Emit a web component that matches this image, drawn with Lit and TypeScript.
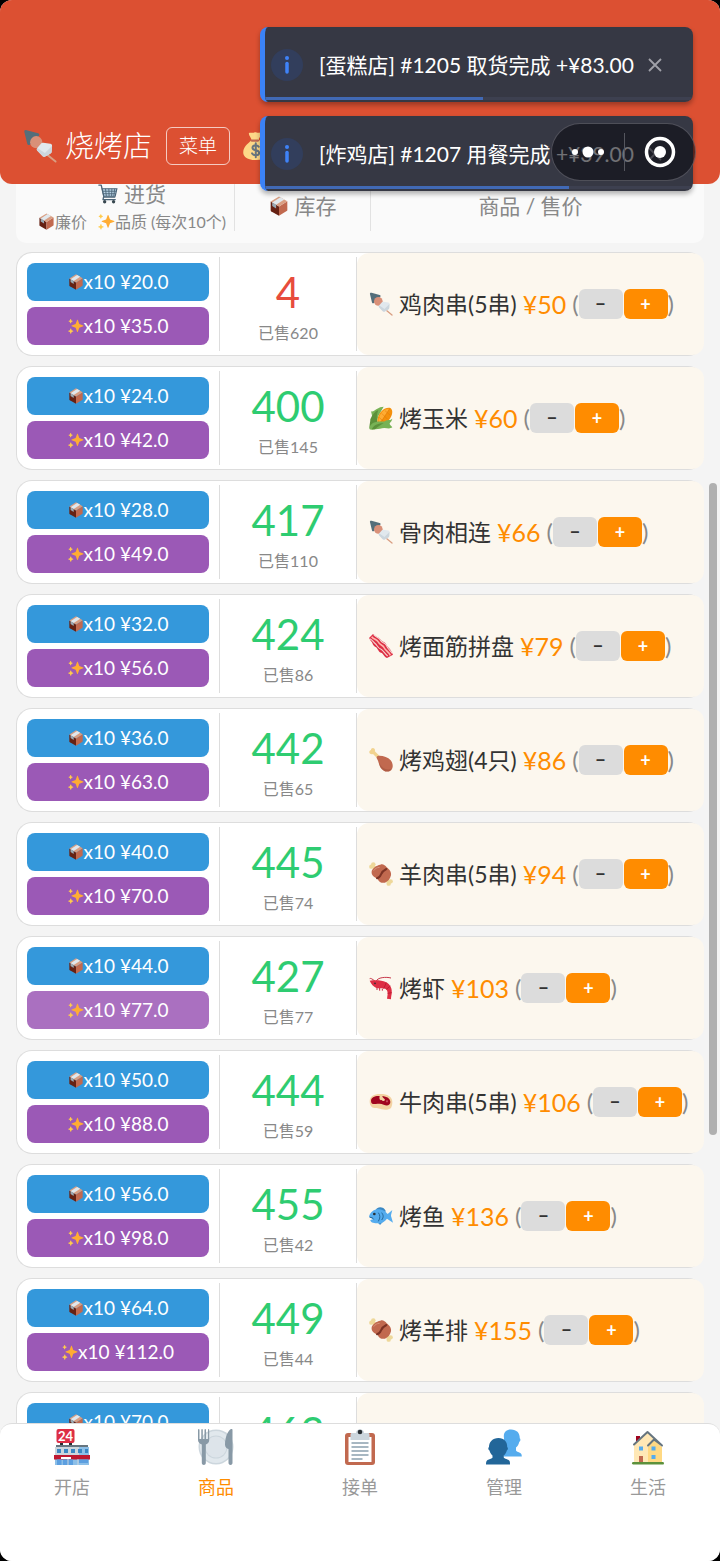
import { LitElement, html, css, svg } from "lit";
import { customElement, property } from "lit/decorators.js";
import { classMap } from "lit/directives/class-map.js";
import { styleMap } from "lit/directives/style-map.js";

const glyphs: Record<string, unknown> = {
  skewer: svg`
    <path d="M24 26l10.500 8.500" stroke="#d99e82" stroke-width="2" stroke-linecap="round"/>
    <path fill="#546e7a" d="M1.500 3.500C1 1.500 2 .8 3.800 1.200L16 4.500c1.500.5 1.700 2 .7 3L7.500 16.500c-1.200 1-2.600.6-3-.8z"/>
    <circle cx="14" cy="14" r="6.500" fill="#d99078"/>
    <path fill="#e1e8ed" d="M21.500 14.500l7.500 1.200c1.300.3 1.800 1.300 1.800 2.400l-.5 6c-.1 1-.7 1.600-1.500 2l-5.300 3c-1 .6-2 .4-2.800-.4l-5.500-5.700c-.8-.9-.8-1.900-.1-2.800l4.300-5c.6-.6 1.300-.8 2.100-.7z"/>
    <path fill="#ccd6dd" d="M15.200 20l8 5.500 7.500-7.500-.4 6.200c-.1 1-.7 1.600-1.500 2l-5.300 3c-1 .6-2 .4-2.800-.4l-5.500-5.700c-.8-.9-.8-1.900 0-3.100z"/>`,
  box: svg`
    <path fill="#662113" d="M3 10l15 9v16.500L4.200 27.700C3.400 27.200 3 26.600 3 25.700z"/>
    <path fill="#c1694f" d="M33 9.500L18 19v16.500l13.800-8.300c.8-.5 1.200-1.100 1.200-2z"/>
    <path fill="#d99e82" d="M18 .8L33 9.500 18 19 3 10z"/>
    <path fill="#e1e8ed" d="M20.500 2.300L5.800 11.700l7 4.200L27.500 6.300z"/>
    <path fill="#99aab5" d="M5.800 11.700l7 4.200v6.500l-7-4.300z"/>`,
  sparkles: svg`
    <path fill="#ffac33" d="M34.347 16.893l-8.899-3.294-3.323-8.891c-.128-.343-.457-.571-.824-.571s-.695.228-.823.571l-3.322 8.891-8.900 3.294c-.343.128-.572.456-.572.823s.229.695.572.822l8.900 3.294 3.322 8.891c.128.343.457.571.823.571s.696-.228.824-.571l3.323-8.891 8.899-3.294c.343-.127.572-.455.572-.822s-.229-.694-.572-.823z"/>
    <path fill="#ffcc4d" d="M11.500 28.500l-3.200-1.200-1.200-3.200c-.3-.8-1.400-.8-1.700 0l-1.200 3.200L1 28.500c-.8.3-.8 1.400 0 1.700l3.200 1.200 1.200 3.200c.3.800 1.400.8 1.700 0l1.200-3.200 3.200-1.200c.8-.3.8-1.400 0-1.700zM10 6.200L7.600 5.400 6.800 3c-.3-.8-1.400-.8-1.700 0l-.9 2.400-2.300.8c-.8.3-.8 1.400 0 1.700l2.300.9.900 2.300c.3.800 1.400.8 1.700 0l.8-2.300 2.400-.9c.8-.3.8-1.400 0-1.700z"/>`,
  cart: svg`
    <path fill="none" stroke="#4b6478" stroke-width="2.400" stroke-linecap="round" stroke-linejoin="round" d="M1.500 2h4.300l4.900 21.500h19.500M10 23.500l-1 4.500h22"/>
    <path fill="#b8d3e6" stroke="#4b6478" stroke-width="2" d="M7.500 8.500h26.500l-3 13.500H10.500z"/>
    <path stroke="#4b6478" stroke-width="1.600" d="M8 13h25M9.500 17.500h22M13.500 8.500L15 22M19.500 8.500l.5 13.500M25 8.500l-.5 13.500M30 8.500L28.500 22"/>
    <circle cx="12" cy="32" r="3" fill="#37474f"/><circle cx="28" cy="32" r="3" fill="#37474f"/>`,
  money: svg`
    <path fill="#fdd888" d="M31.900 21c-3.300-5.900-9.400-10.100-10.300-11.400-.6-.9 4-6 3.400-8.100-.5-1.700-3-.5-4.400-.5S18 0 16.500.2c-1.300.2-1.700.9-3 .9-1.400 0-4-.7-4.600.5C7.900 3.700 13.100 8.900 12 10.500 10.800 12.300 5 16 2.500 21.500.500 26.200.200 36 18 36c18.300 0 17-9.300 13.900-15z"/>
    <path fill="#bf6952" d="M22 10.500c.3 1-.5 2-1.500 2h-8c-1 0-1.800-.9-1.500-2 .2-.8.9-1 1.800-1h7.300c.9 0 1.700.200 1.900 1z"/>
    <path fill="none" stroke="#67757f" stroke-width="2.600" stroke-linecap="round" d="M21.500 19c-1-1.500-2.500-2-4-2-2.200 0-4 1.300-4 3.200 0 4.600 8.500 2 8.500 6.500 0 2-1.900 3.300-4.300 3.300-2 0-3.700-.8-4.700-2.500M17.700 14.500v18"/>`,
  corn: svg`
    <path fill="#77b255" d="M3 8c3 1 5-1 8-3 4-3 8-4 11-4l-8 14-3 14-8 2c2-7 3-13 0-23z"/>
    <path fill="#5c913b" d="M2 20C5 13 9 8 14 6c-3 8-3 15 0 21L2 35c-3-2 0-9 0-15z"/>
    <path fill="#f4900c" d="M13 19C15 9 24 1 32 3c5 3 3 12-2 18-4 5-10 8-14 7-3-2-4-5-3-9z"/>
    <path fill="#ffac33" d="M15 17C18 9 24 4 30 4c-1 3-3 6-6 10-3 5-6 9-9 11-1-2-1-5 0-8z"/>
    <path stroke="#e07b08" stroke-width=".8" fill="none" d="M19 11l9 9M24 7l8 7M15 17l9 8M31 4L17 26"/>
    <path fill="#77b255" d="M1 35c-1-6 4-10 10-11 6-2 10 1 14-2 4-2 7 0 10-3-1 5-4 5-4 8 1 2 3 3 4 5-4 3-8 1-12 1-5 0-8 2-13 2-4 1-7 1-9 0z"/>
    <path fill="#5c913b" d="M4 35c4-7 10-9 18-9-5 2-9 6-12 8-2 1-4 1-6 1z"/>`,
  bacon: svg`
    <path fill="#dd2e44" d="M6 0c3 4 8 4 11 8 2 4 7 3 9 8 2 4 5 5 7 9l3 6-9 5c-5-2-5-7-9-8-5-2-4-7-9-9-4-2-3-6-6-8L0 6z"/>
    <path fill="none" stroke="#ffb6ae" stroke-width="2.400" d="M4 4c3 4 8 4 10 8 2 5 7 4 9 9 2 4 6 5 9 11"/>
    <path fill="none" stroke="#f4d7d3" stroke-width="1.600" d="M1 7c5 2 5 5 9 8 3 3 3 6 8 8 4 2 5 6 10 10M7 1c3 4 8 4 10 8 2 5 7 3 9 8 2 5 5 7 9 12"/>`,
  drumstick: svg`
    <path fill="#f2d38f" d="M15 18L6 9C3.500 10 1 9 .5 6.800 0 4.800 1.600 3.300 3 3c0-2 1.700-3.200 3.800-2.700C9 .9 9.300 3 8.700 5l10 9.500z"/>
    <path fill="#c1694f" d="M12 16c-1.500-2 0-4.500 2.500-4.500 7-.2 14 2 18 7 5 6.500 3.500 13.500-1 16-5 2.500-11-.3-14-5-2.700-4-3-9.500-5.500-13.500z"/>
    <path fill="#a0503a" d="M15 21c3 9 11 13 18.500 10.500-.6 1.300-1.300 2.200-2.500 3-5 2.500-10.500-.3-13.500-5-1.500-2.300-2-5.500-2.500-8.500z" opacity=".5"/>`,
  meat: svg`
    <path stroke="#eed89a" stroke-width="5" d="M5 5l26 27"/>
    <circle cx="6.500" cy="3.500" r="3.300" fill="#eed89a"/><circle cx="3.500" cy="7" r="3.300" fill="#eed89a"/><circle cx="32.500" cy="29" r="3.300" fill="#eed89a"/><circle cx="29.500" cy="32.500" r="3.300" fill="#eed89a"/>
    <path fill="#c1694f" d="M17 4c4-1.500 7 1 9.500 4 4 3 7.500 7 6.500 12-1 5-4 9-9 11-5 1-9-1-11.500-6C8 23 3 20 4 14c1-4.500 7-9 13-10z"/>
    <path fill="none" stroke="#7c3325" stroke-width="3" stroke-linecap="round" d="M12 24.500c4-1 5-3.500 6-6s4-6 8-8"/>
    <path fill="none" stroke="#d99078" stroke-width="1.500" d="M7 13c2-3 5-5 9-5"/>`,
  shrimp: svg`
    <path fill="none" stroke="#be1931" stroke-width="1.300" d="M9 8C5 4 2 3 1 4M11 8C12 2 26 1 33 3"/>
    <path fill="#dd2e44" d="M1 7c8-1 18-1 24 2 8 4 10 11 9 18-.5 3-1 4-1 8l-6-1 1-7c0-5-1-7-4-8-5-1-9 0-13-1C7 16 3 12 1 7z"/>
    <path stroke="#be1931" stroke-width="1.400" fill="none" d="M22 19l4-9M26 20l6-5M28 26l6-1M12 18v3M16 18v4M20 19v3"/>
    <circle cx="9" cy="11" r="1.300" fill="#292f33"/>`,
  steak: svg`
    <path fill="#f3d2a2" d="M1 17C1 9 8 6 16 6c10-.5 19 3 19 12 0 3-.5 6-2 9-3 3-9 3-14 2-3-1-6-2-10-2-5 .5-8-4-8-10z"/>
    <path fill="#a0041e" d="M3 16C3 11 9 8.500 16 9c9-.5 16 3 16 9 0 5-5 6.500-10 4-4-2-8-1-12-1-4 .500-7 0-7-5z"/>
    <path fill="#f3d2a2" d="M16 9h4c0 3 4 4 4 6-1 2-4 2-5 0-3 1-4-2-3-6z"/><circle cx="27" cy="17" r="1.700" fill="#c9475a"/>`,
  fish: svg`
    <path fill="#3b88c3" d="M10 9C13 3 22 4 25 10l-3 15-5 6c-3-1-3-3-3-6z"/>
    <path fill="#55acee" d="M0 19C2 11 9 7 16 8c6 1 9 4 12 7l7-6c-1 4-2 7-2 9 1 3 2 7 3 10l-9-6c-4 5-9 8-15 7C6 29 2 27 2 24l4-1z"/>
    <circle cx="8" cy="15" r="2" fill="#292f33"/><path d="M1 20c3 0 5 1 6 3M14 13c3 4 3 8 0 13M19 13c3 4 3 7 0 11" fill="none" stroke="#226699" stroke-width="1.500"/>`,
  store: svg`
    <path fill="#292f33" d="M6 12h3v5H6zM15 12h3v5h-3z"/>
    <rect x="2.500" y="0" width="18" height="14" rx="2" fill="#dd2e44"/>
    <path fill="#66757f" d="M2 16h32v3H2z"/>
    <path fill="#8cbfe8" d="M1 18h34v18H1z"/><path fill="#ccd6dd" d="M1 18h24v8H1z"/>
    <path fill="#3b88c3" d="M3 20h4v4H3zM10 20h4v4h-4zM17 20h4v4h-4zM24 20h4v4h-4zM31 20h3v4h-3z"/>
    <path fill="#be1931" d="M0 26h36v4.500H0z"/><path fill="#fff" d="M7 28h10v2H7z"/>
    <path fill="#5c9fe0" d="M3 30.500h4.500V36H3zM9 30.500h10V36H9zM25 30.500h9V34h-9z"/><path stroke="#ccd6dd" d="M14 30v6M24 30v6"/>
    <text x="11.500" y="11.800" text-anchor="middle" font-family="Lato, sans-serif" font-size="13" font-weight="700" fill="#fff">24</text>`,
  plate: svg`
    <circle cx="18" cy="18" r="17.500" fill="#ccd6dd"/><circle cx="18" cy="18" r="16" fill="#e1e8ed"/>
    <circle cx="18" cy="18" r="11.500" fill="#ccd6dd"/><circle cx="18" cy="18" r="10.500" fill="#dde4ea"/>
    <path fill="#8899a6" d="M0 1c0-1.300 1.500-1.300 1.500 0v9h1.800V1c0-1.300 1.500-1.300 1.500 0v9h1.700V1c0-1.300 1.500-1.300 1.500 0v9H10V1c0-1.300 1.200-1.300 1.200 0v10c0 2-1.200 3.500-3.400 4.500V34c0 2.600-4 2.600-4 0V15.500C1.500 14.500 0 13 0 11zM34.500 1v33c0 2.600-4 2.600-4 0V20c-2-.5-3.500-2-3.500-4.500C27 7 31 0 33.500 0c.7 0 1 .4 1 1z"/>`,
  clipboard: svg`
    <rect x="3" y="4" width="30" height="32" rx="3" fill="#c1694f"/>
    <path fill="#fff" d="M6.500 8h23v25h-23z"/>
    <path fill="#ccd6dd" d="M10 4h4c0-5 8-5 8 0h4c1 0 1.500.7 1.500 1.500V11h-19V5.500C8.500 4.700 9 4 10 4z"/><circle cx="18" cy="3" r="2.300" fill="#292f33"/>
    <path stroke="#8aa0ae" stroke-width="1.400" d="M9.500 14h17M9.500 18h17M9.500 22h17M9.500 26h17M9.500 30h11"/>`,
  people: svg`
    <path fill="#55acee" d="M25 .5c6 0 9 4 8.700 8.700 1 .4 1 3-.4 3.500-.5 2.600-1.800 4.500-3.300 5.800v3c1.500 2 5 1.800 5.500 4 .2.800.3 1.500.3 2H18V9C17 4 20 .5 25 .5z"/>
    <path fill="#226699" d="M12.500 9c5.700 0 9 4 8.700 9 1 .4 1 3-.4 3.500-.5 2-1.500 3.800-3 5v2.300c2 1.700 5.500 1.500 6 4 .2.800.2 1.700.2 2.700H0c0-1 0-1.900.3-2.700.6-2.500 4.500-2.300 6.200-4v-2.300c-1.500-1.200-2.500-3-3-5C2 21 2 18.500 3 18 3 13 6.500 9 12.500 9z"/>`,
  house: svg`
    <path fill="#a0041e" d="M6 7h4v9H6z"/>
    <path fill="#ffe8b6" d="M4 15L17.500 3 30 15v19H4z"/><path fill="#ffd983" d="M18 18l6-7 8 7v16H18z"/>
    <path fill="none" stroke="#66757f" stroke-width="2" stroke-linecap="round" stroke-linejoin="round" d="M4 15.500L17.500 3 32 16.500M18 16.500l6-6L32 16.500"/>
    <path fill="#55acee" d="M9 17.500h4v4H9zM21.500 17.500h4v4h-4zM21.500 26h4v4h-4z"/><path fill="#c1694f" d="M9 27h4v7H9z"/>
    <path fill="#5c913b" d="M3 33h30c1 0 1.500 2.500 0 2.500H3c-1.500 0-1.500-2.500 0-2.500z"/>`,
};

@customElement("emoji-icon")
export class EmojiIcon extends LitElement {
  @property() name = "box";
  static styles = css`
    :host { display: inline-block; flex: none; width: 24px; height: 24px; }
    .art { display: block; width: 100%; height: 100%; }
  `;
  render() {
    return html`<svg class="art" viewBox="0 0 36 36" fill="none" aria-hidden="true">${glyphs[this.name]}</svg>`;
  }
}

interface Product {
  icon: string; name: string; price: number; stock: number; sold: number;
  cheap: string; fine: string; low?: boolean; pressed?: boolean;
}

const products: Product[] = [
  { icon: "skewer", name: "鸡肉串(5串)", price: 50, stock: 4, sold: 620, cheap: "20.0", fine: "35.0", low: true },
  { icon: "corn", name: "烤玉米", price: 60, stock: 400, sold: 145, cheap: "24.0", fine: "42.0" },
  { icon: "skewer", name: "骨肉相连", price: 66, stock: 417, sold: 110, cheap: "28.0", fine: "49.0" },
  { icon: "bacon", name: "烤面筋拼盘", price: 79, stock: 424, sold: 86, cheap: "32.0", fine: "56.0" },
  { icon: "drumstick", name: "烤鸡翅(4只)", price: 86, stock: 442, sold: 65, cheap: "36.0", fine: "63.0" },
  { icon: "meat", name: "羊肉串(5串)", price: 94, stock: 445, sold: 74, cheap: "40.0", fine: "70.0" },
  { icon: "shrimp", name: "烤虾", price: 103, stock: 427, sold: 77, cheap: "44.0", fine: "77.0", pressed: true },
  { icon: "steak", name: "牛肉串(5串)", price: 106, stock: 444, sold: 59, cheap: "50.0", fine: "88.0" },
  { icon: "fish", name: "烤鱼", price: 136, stock: 455, sold: 42, cheap: "56.0", fine: "98.0" },
  { icon: "meat", name: "烤羊排", price: 155, stock: 449, sold: 44, cheap: "64.0", fine: "112.0" },
  { icon: "steak", name: "烤牛排", price: 168, stock: 463, sold: 38, cheap: "70.0", fine: "122.0" },
];

const toasts = [
  { text: "[蛋糕店] #1205 取货完成 +¥83.00", progress: 51 },
  { text: "[炸鸡店] #1207 用餐完成 +¥39.00", progress: 71 },
];

const tabs = [
  { icon: "store", label: "开店" },
  { icon: "plate", label: "商品", active: true },
  { icon: "clipboard", label: "接单" },
  { icon: "people", label: "管理" },
  { icon: "house", label: "生活" },
];

@customElement("app-root")
export class AppRoot extends LitElement {
  static styles = css`
    :host {
      display: block;
      background: #000;
      font-family: Lato, "Noto Sans CJK SC", sans-serif;
      color: #333;
    }
    * { box-sizing: border-box; }
    button { font: inherit; border: 0; padding: 0; margin: 0; cursor: pointer; }
    .screen {
      position: relative;
      display: flex;
      flex-direction: column;
      height: 100vh;
      overflow: hidden;
      border-radius: 12px;
      background: #f4f4f4;
    }
    .top {
      flex: none;
      display: flex;
      align-items: center;
      padding: 108px 23px 0;
      height: 184px;
      background: #dc5032;
      border-radius: 0 0 12px 12px;
      color: #fff;
    }
    .top .logo { width: 34px; height: 34px; }
    .title { margin: 0 14px 0 8px; font-size: 29px; line-height: 44px; font-weight: 300; }
    .menu {
      width: 64px;
      height: 38px;
      margin-right: 12px;
      border: 1px solid rgba(255, 255, 255, 0.7);
      border-radius: 6px;
      background: none;
      color: #fff;
      font-size: 19px;
      line-height: 34px;
      font-weight: 300;
    }
    .top .bag { width: 28px; height: 28px; }

    .list { flex: 1; min-height: 0; overflow: hidden; padding: 0 16px; }
    .table, .body, .head { display: block; }
    .row, .heading { display: grid; }
    .row { grid-template-columns: 202px 138px minmax(0, 1fr); }
    .heading {
      grid-template-columns: 204px 136px minmax(0, 1fr);
      padding: 0 14px 12px;
      margin-bottom: 9px;
      background: #fafafa;
      border-radius: 0 0 10px 10px;
      color: #888;
    }
    .col {
      display: flex;
      flex-direction: column;
      align-items: center;
      justify-content: center;
      gap: 4px;
      height: 47px;
      padding: 0;
      font-size: 21px;
      line-height: 24px;
      font-weight: 400;
      white-space: nowrap;
    }
    .col + .col { padding-bottom: 4px; border-left: 1px solid #e2e2e2; }
    .line { display: flex; align-items: center; gap: 6px; }
    .line emoji-icon { width: 20px; height: 20px; }
    .hint { display: flex; align-items: center; font-size: 16px; line-height: 24px; }
    .hint emoji-icon { width: 17px; height: 17px; }
    .hint .next { margin-left: 11px; }

    .row {
      margin-bottom: 10px;
      border: 1px solid #ddd;
      border-right: 0;
      border-radius: 16px;
      background: #fff;
    }
    .cell { padding: 0; }
    .buy { display: flex; flex-direction: column; gap: 6px; padding: 10px; }
    .order {
      display: flex;
      align-items: center;
      justify-content: center;
      height: 38px;
      border-radius: 8px;
      background: #3498db;
      color: #fff;
      font-size: 19px;
      line-height: 24px;
    }
    .order emoji-icon { width: 16px; height: 16px; }
    .order.fine { background: #9b59b6; }
    .order.pressed { background: #aa70c0; }
    .stock {
      display: flex;
      flex-direction: column;
      align-items: center;
      margin: 4px 0;
      padding-top: 10px;
      border: solid #ddd;
      border-width: 0 1px;
      text-align: center;
    }
    .count { font-size: 42px; line-height: 50px; color: #2ecc71; }
    .count.low { color: #e74c3c; }
    .sold { font-size: 16px; line-height: 24px; margin-top: 4px; color: #888; }
    .item {
      display: flex;
      align-items: center;
      padding-left: 12px;
      border-radius: 12px;
      background: #fcf7ee;
      white-space: nowrap;
    }
    .name { margin: 0 6px; font-size: 23px; line-height: 32px; }
    .price { font-size: 25px; line-height: 32px; color: #ff8c00; margin-right: 6px; }
    .paren { font-size: 24px; line-height: 32px; color: #888; }
    .step {
      width: 44px;
      height: 30px;
      border-radius: 6px;
      background: #dcdcdc;
      color: #333;
      font-size: 18px;
      line-height: 28px;
      font-weight: 700;
    }
    .step.plus { margin-left: 1px; background: #ff8c00; color: #fff; }

    .tabs {
      flex: none;
      display: grid;
      grid-template-columns: repeat(5, 1fr);
      align-items: start;
      height: 138px;
      padding-top: 5px;
      border-top: 1px solid #ddd;
      border-radius: 12px 12px 0 0;
      background: #fff;
    }
    .tab {
      display: flex;
      flex-direction: column;
      align-items: center;
      gap: 9px;
      color: #999;
      font-size: 18px;
      line-height: 26px;
      text-decoration: none;
    }
    .tab emoji-icon { width: 36px; height: 36px; }
    .tab.active { color: #ff8c00; }

    .thumb {
      position: absolute;
      top: 483px;
      right: 3px;
      width: 8px;
      height: 652px;
      border-radius: 4px;
      background: #b0b0b0;
    }
    .toasts {
      position: absolute;
      top: 27px;
      right: 27px;
      display: flex;
      flex-direction: column;
      gap: 14px;
      width: 433px;
    }
    .toast {
      position: relative;
      display: flex;
      align-items: center;
      height: 75px;
      padding: 0 24px 0 6px;
      border-left: 5px solid #3b82f6;
      border-radius: 8px;
      background: #363844;
      color: #fff;
      overflow: hidden;
    }
    .wrap { border-radius: 8px; box-shadow: 0 3px 5px rgba(0, 0, 0, 0.3); }
    .info { flex: none; width: 32px; height: 32px; }
    .message { margin: 0 0 0 16px; flex: 1; min-width: 0; font-size: 21px; line-height: 28px; white-space: nowrap; }
    .close { flex: none; display: flex; align-items: center; justify-content: center; width: 28px; height: 28px; background: none; }
    .bar { position: absolute; left: 0; right: 0; bottom: 2px; height: 3px; background: #3d4050; }
    .fill { height: 100%; background: #4169b5; }

    .capsule {
      position: absolute;
      top: 123px;
      right: 24px;
      display: flex;
      align-items: center;
      width: 145px;
      height: 58px;
      padding-left: 1px;
      border: 1px solid rgba(140, 140, 150, 0.45);
      border-radius: 29px;
      background: rgba(11, 11, 17, 0.58);
    }
    .cap { flex: 1; height: 38px; display: flex; align-items: center; justify-content: center; background: none; }
    .cap + .cap { border-left: 1px solid #55565e; }
  `;

  private renderToast(t: { text: string; progress: number }) {
    return html`
      <div class="wrap">
        <div class="toast" role="status">
          <svg class="info" viewBox="0 0 32 32" aria-hidden="true">
            <circle cx="16" cy="16" r="16" fill="#323e5c" />
            <circle cx="16" cy="9" r="2" fill="#3f83f8" />
            <path d="M16 14.500v8.500" stroke="#3f83f8" stroke-width="3.500" stroke-linecap="round" />
          </svg>
          <p class="message">${t.text}</p>
          <button class="close" aria-label="关闭">
            <svg width="14" height="14" viewBox="0 0 14 14" aria-hidden="true">
              <path d="M1 1l12 12M13 1L1 13" stroke="#a0a1a9" stroke-width="1.800" />
            </svg>
          </button>
          <div class="bar"><div class="fill" style=${styleMap({ width: `${t.progress}%` })}></div></div>
        </div>
      </div>`;
  }

  private renderProduct(p: Product) {
    return html`
      <tr class="row">
        <td class="cell buy">
          <button class="order"><emoji-icon name="box"></emoji-icon>x10 ¥${p.cheap}</button>
          <button class=${classMap({ order: true, fine: true, pressed: !!p.pressed })}>
            <emoji-icon name="sparkles"></emoji-icon>x10 ¥${p.fine}
          </button>
        </td>
        <td class="cell stock">
          <span class=${classMap({ count: true, low: !!p.low })}>${p.stock}</span>
          <span class="sold">已售${p.sold}</span>
        </td>
        <td class="cell item">
          <emoji-icon name=${p.icon}></emoji-icon>
          <span class="name">${p.name}</span>
          <span class="price">¥${p.price}</span>
          <span class="paren">(</span>
          <button class="step" aria-label="降价">−</button>
          <button class="step plus" aria-label="涨价">+</button>
          <span class="paren">)</span>
        </td>
      </tr>`;
  }

  render() {
    return html`
      <div class="screen">
        <header class="top">
          <emoji-icon class="logo" name="skewer"></emoji-icon>
          <h1 class="title">烧烤店</h1>
          <button class="menu">菜单</button>
          <emoji-icon class="bag" name="money"></emoji-icon>
        </header>

        <main class="list">
          <table class="table">
            <thead class="head">
              <tr class="heading">
                <th class="col">
                  <span class="line"><emoji-icon name="cart"></emoji-icon>进货</span>
                  <span class="hint">
                    <emoji-icon name="box"></emoji-icon>廉价
                    <emoji-icon class="next" name="sparkles"></emoji-icon>品质 (每次10个)
                  </span>
                </th>
                <th class="col"><span class="line"><emoji-icon name="box"></emoji-icon>库存</span></th>
                <th class="col">商品 / 售价</th>
              </tr>
            </thead>
            <tbody class="body">${products.map((p) => this.renderProduct(p))}</tbody>
          </table>
        </main>

        <nav class="tabs">
          ${tabs.map((t) => html`
            <a class=${classMap({ tab: true, active: !!t.active })} href="#">
              <emoji-icon name=${t.icon}></emoji-icon>${t.label}
            </a>`)}
        </nav>

        <div class="thumb"></div>
        <div class="toasts">${toasts.map((t) => this.renderToast(t))}</div>
        <div class="capsule">
          <button class="cap" aria-label="更多">
            <svg width="32" height="12" viewBox="0 0 32 12" fill="#fff" aria-hidden="true">
              <circle cx="3" cy="6" r="3" /><circle cx="16" cy="6" r="5.500" /><circle cx="29" cy="6" r="3" />
            </svg>
          </button>
          <button class="cap" aria-label="退出">
            <svg width="32" height="32" viewBox="0 0 32 32" aria-hidden="true">
              <circle cx="16" cy="16" r="13.500" fill="none" stroke="#fff" stroke-width="3.500" />
              <circle cx="16" cy="16" r="6" fill="#fff" />
            </svg>
          </button>
        </div>
      </div>`;
  }
}
